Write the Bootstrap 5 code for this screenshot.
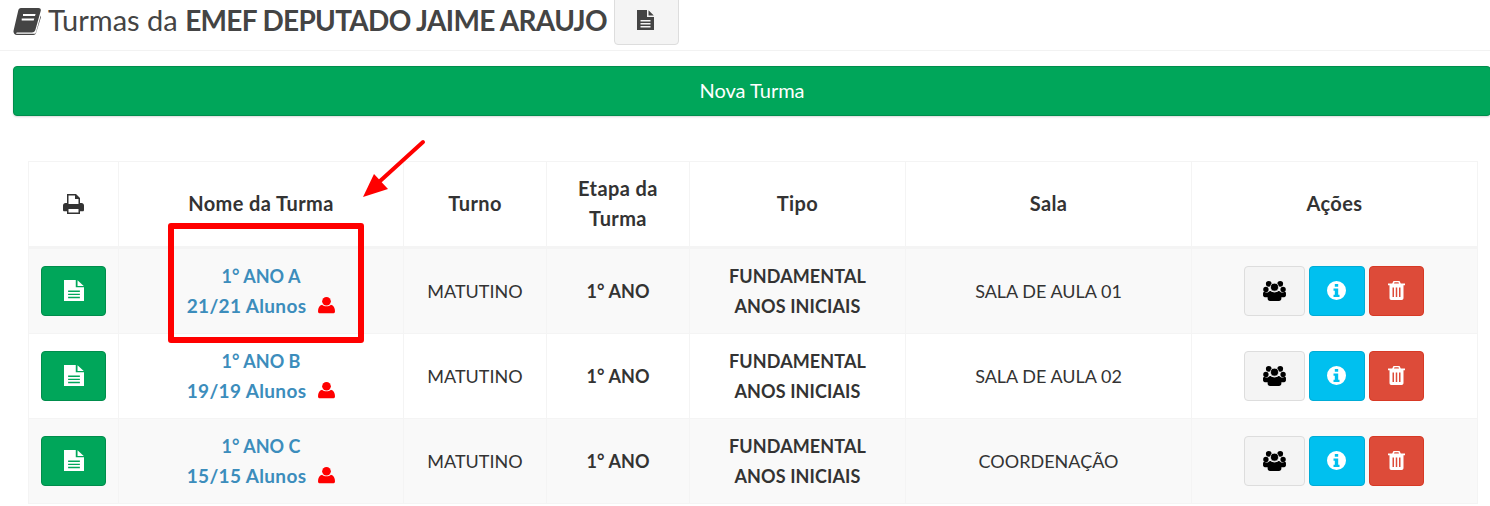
<!DOCTYPE html>
<html lang="pt-BR"><head><meta charset="utf-8"><title>Turmas</title>
<link href="https://cdn.jsdelivr.net/npm/bootstrap@5.3.0/dist/css/bootstrap.min.css" rel="stylesheet">
<style>
html,body{height:506px;overflow:hidden;background:#fff}
body{font-family:"Lato","Noto Sans",sans-serif;color:#333;position:relative;width:1490px}
.topbar{height:51px;border-bottom:1px solid #f2f2f2;padding-left:13px;gap:7px}
.topbar h1{font-size:29px;font-weight:400;color:#444;margin:0;line-height:40px;white-space:nowrap}
.topbar h1 b{font-weight:700;font-size:28px;letter-spacing:-.68px}
.topbar h1 svg{width:28px;height:27px;vertical-align:-4px;fill:#444;margin-right:7px}
.docbtn{width:65px;height:50px;margin-top:-5px;background:#f4f4f4;border:1px solid #ddd;border-radius:4px;display:flex;align-items:center;justify-content:center;padding:0}
.docbtn svg{width:19px;height:20px;fill:#444}
.newbtn{display:block;width:1478px;height:50px;margin:15px 0 0 13px;background:#00a65a;border:1px solid #008d4c;border-radius:4px;color:#fff;font-size:20px;box-shadow:0 1px 2px rgba(0,0,0,.15);padding:0 0 2px}
.newbtn:hover{background:#00a65a;color:#fff}
.tablewrap{margin:45px 0 0 28px;width:1449px}
.turmas{table-layout:fixed;width:1449px;margin:0;border-color:#f4f4f4;font-size:18px;--bs-table-striped-bg:#f9f9f9;--bs-table-striped-color:#333;--bs-table-color:#333}
.turmas th,.turmas td{padding:0 8px;height:85px;text-align:center;vertical-align:middle;line-height:30px;border:1px solid #f4f4f4}
.turmas thead th{border-bottom:3px solid #f4f4f4;height:86px;font-weight:700;font-size:20px;letter-spacing:.4px;padding-bottom:2px}
.turmas tbody tr:first-child td{height:86px}
.turmas td{font-weight:400}
.turmas td.strong{font-weight:700;letter-spacing:.1px}
.turmas a{color:#3c8dbc;font-weight:700;text-decoration:none}
.turmas a .cnt{font-size:19px;letter-spacing:.35px}
.turmas a svg{width:17px;height:18px;fill:#f00;margin-left:12px;vertical-align:-1px}
.printer{width:21px;height:20px;fill:#333;vertical-align:-3px}
.act{height:50px;border-radius:4px;display:inline-flex;align-items:center;justify-content:center;padding:0;border:1px solid transparent;vertical-align:middle}
.act-green{width:65px;background:#00a65a;border-color:#008d4c}
.act-green svg{width:20px;height:21px;margin-top:-1px}
.act-def{width:61px;background:#f4f4f4;border-color:#ddd}
.act-info{width:56px;background:#00c0ef;border-color:#00acd6}
.act-red{width:55px;background:#dd4b39;border-color:#d73925}
.act svg{fill:#fff}
.act-def svg{width:23px;height:21px;fill:#000;margin-top:-1px}
.act-info svg{width:19px;height:19px;margin-top:-1px}
.act-red svg{width:17px;height:19px;margin-top:-1px}
.actgroup{gap:4px;padding-right:2px}
.callout{position:absolute;left:168px;top:223px;width:196px;height:120px;border:6px solid #f00;border-radius:3px;pointer-events:none}
.arrow{position:absolute;left:355px;top:135px;width:80px;height:70px;pointer-events:none}
</style></head><body>
<svg width="0" height="0" class="position-absolute"><defs>
<symbol id="i-file" viewBox="1 0 17 20" preserveAspectRatio="none"><path fill-rule="evenodd" d="M1 0h10v7h7v13H1zM12.500 0.300 17.800 5.600H12.500zM4.500 10v1.400h10V10zM4.500 13v1.400h10V13zM4.500 16v1.400h10V16z"/></symbol>
<symbol id="i-user" viewBox="0 0 18 18"><circle cx="9" cy="5" r="4.600"/><path d="M0 15.500C0 12 1.500 9.500 4.300 8.700 5.500 9.800 7.200 10.400 9 10.400s3.500-.6 4.700-1.700C16.500 9.500 18 12 18 15.500 18 17 17 18 15.500 18h-13C1 18 0 17 0 15.500z"/></symbol>
<symbol id="i-users" viewBox="0 0 24 22"><circle cx="6" cy="4" r="3"/><circle cx="18" cy="4" r="3"/><circle cx="3" cy="10" r="2.800"/><circle cx="21" cy="10" r="2.800"/><path d="M0 13.500C0 12.500 1 12 3 13H6.200V18H2C.8 18 0 17 0 16zM24 13.500C24 12.500 23 12 21 13H17.800V18H22C23.200 18 24 17 24 16z"/><circle cx="12" cy="7.500" r="4.200" stroke="#f4f4f4" stroke-width=".8"/><path d="M4.800 15C4.800 12.800 6 11.500 8 11.500 9 12.500 10.500 13 12 13s3-.5 4-1.500c2 0 3.200 1.300 3.200 3.500v4.500c0 1.500-1 2.500-2.500 2.500H7.300c-1.500 0-2.500-1-2.500-2.500z"/></symbol>
<symbol id="i-info" viewBox="0 0 19 19"><path fill-rule="evenodd" d="M9.500 0a9.500 9.500 0 1 0 0 19 9.500 9.500 0 0 0 0-19zM7.800 3h3.400v2.800H7.800zM6.500 7.500h4.700v6.200h1.300V16h-6v-2.300h1.300V9.800H6.500z"/></symbol>
<symbol id="i-trash" viewBox="0 0 17 19"><path fill-rule="evenodd" d="M5.500 0h6l1.300 2.500H17v1.700h-1.500V17c0 1.200-.8 2-1.800 2H3.300c-1 0-1.800-.8-1.800-2V4.200H0V2.500h4.200zM6.500 1.300 6 2.500h5l-.5-1.200zM4.500 6.500V16H6V6.500zM7.750 6.500V16h1.500V6.500zM11 6.500V16h1.500V6.500z"/></symbol>
</defs></svg>

<header class="topbar d-flex align-items-start">
<h1><svg viewBox="0 0 28 27"><path fill-rule="evenodd" d="M8 0h17.500c1.800 0 2.700 1.200 2.200 3L22.500 21.500c-.5 1.900-1.700 3-3.700 3H4.500C3.500 24.500 3 25 3.300 25.700H21c1 0 1.700-.5 2-1.500L27.700 7.500l.3 1.500L23 25c-.4 1.200-1.300 2-2.600 2H4C1.500 27 0 25 .6 22.500L5.200 2.800C5.600 1 6.500 0 8 0zM10 6v2h12l.6-2zM8.700 10.500v2h12l.6-2z"/></svg>Turmas da <b>EMEF DEPUTADO JAIME ARAUJO</b></h1>
<button class="docbtn" type="button" aria-label="Relatório"><svg viewBox="1 0 17 20"><use href="#i-file"/></svg></button>
</header>

<button class="btn newbtn" type="button">Nova Turma</button>

<div class="tablewrap">
<table class="table table-striped turmas">
<colgroup><col style="width:90px"><col style="width:285px"><col style="width:143px"><col style="width:143px"><col style="width:216px"><col style="width:286px"><col style="width:286px"></colgroup>
<thead><tr>
<th><svg class="printer" viewBox="0 0 21 20"><path fill-rule="evenodd" d="M4 0h9l4 4v5h1.500c1.400 0 2.500 1 2.500 2.500V16c0 .8-.5 1.300-1.300 1.300H17V20H4v-2.700H1.300C.5 17.300 0 16.800 0 16v-4.500C0 10 1.100 9 2.500 9H4zM5.500 1.500V10h10V5h-3.500V1.500zM5.500 15v3.500h10V15z"/></svg></th>
<th>Nome da Turma</th><th>Turno</th><th>Etapa da<br>Turma</th><th>Tipo</th><th>Sala</th><th>Ações</th>
</tr></thead>
<tbody>
<tr>
<td><button class="act act-green" type="button" aria-label="Documento"><svg viewBox="0 0 20 21"><use href="#i-file"/></svg></button></td>
<td><a href="#">1° ANO A<br><span class="cnt">21/21 Alunos</span><svg viewBox="0 0 18 18"><use href="#i-user"/></svg></a></td>
<td>MATUTINO</td><td class="strong">1° ANO</td><td class="strong">FUNDAMENTAL<br>ANOS INICIAIS</td><td>SALA DE AULA 01</td>
<td><div class="d-flex justify-content-center actgroup"><button class="act act-def" type="button" aria-label="Alunos"><svg viewBox="0 0 24 22"><use href="#i-users"/></svg></button><button class="act act-info" type="button" aria-label="Info"><svg viewBox="0 0 19 19"><use href="#i-info"/></svg></button><button class="act act-red" type="button" aria-label="Excluir"><svg viewBox="0 0 17 19"><use href="#i-trash"/></svg></button></div></td>
</tr>
<tr>
<td><button class="act act-green" type="button" aria-label="Documento"><svg viewBox="0 0 20 21"><use href="#i-file"/></svg></button></td>
<td><a href="#">1° ANO B<br><span class="cnt">19/19 Alunos</span><svg viewBox="0 0 18 18"><use href="#i-user"/></svg></a></td>
<td>MATUTINO</td><td class="strong">1° ANO</td><td class="strong">FUNDAMENTAL<br>ANOS INICIAIS</td><td>SALA DE AULA 02</td>
<td><div class="d-flex justify-content-center actgroup"><button class="act act-def" type="button" aria-label="Alunos"><svg viewBox="0 0 24 22"><use href="#i-users"/></svg></button><button class="act act-info" type="button" aria-label="Info"><svg viewBox="0 0 19 19"><use href="#i-info"/></svg></button><button class="act act-red" type="button" aria-label="Excluir"><svg viewBox="0 0 17 19"><use href="#i-trash"/></svg></button></div></td>
</tr>
<tr>
<td><button class="act act-green" type="button" aria-label="Documento"><svg viewBox="0 0 20 21"><use href="#i-file"/></svg></button></td>
<td><a href="#">1° ANO C<br><span class="cnt">15/15 Alunos</span><svg viewBox="0 0 18 18"><use href="#i-user"/></svg></a></td>
<td>MATUTINO</td><td class="strong">1° ANO</td><td class="strong">FUNDAMENTAL<br>ANOS INICIAIS</td><td>COORDENAÇÃO</td>
<td><div class="d-flex justify-content-center actgroup"><button class="act act-def" type="button" aria-label="Alunos"><svg viewBox="0 0 24 22"><use href="#i-users"/></svg></button><button class="act act-info" type="button" aria-label="Info"><svg viewBox="0 0 19 19"><use href="#i-info"/></svg></button><button class="act act-red" type="button" aria-label="Excluir"><svg viewBox="0 0 17 19"><use href="#i-trash"/></svg></button></div></td>
</tr>
</tbody></table></div>

<div class="callout"></div>
<svg class="arrow" viewBox="0 0 80 70" aria-hidden="true"><path d="M68 7 24 47" stroke="#f00" stroke-width="4" stroke-linecap="round" fill="none"/><path d="M8 62 19 39 33 54z" fill="#f00"/></svg>
<script src="https://cdn.jsdelivr.net/npm/bootstrap@5.3.0/dist/js/bootstrap.bundle.min.js"></script>
</body></html>
